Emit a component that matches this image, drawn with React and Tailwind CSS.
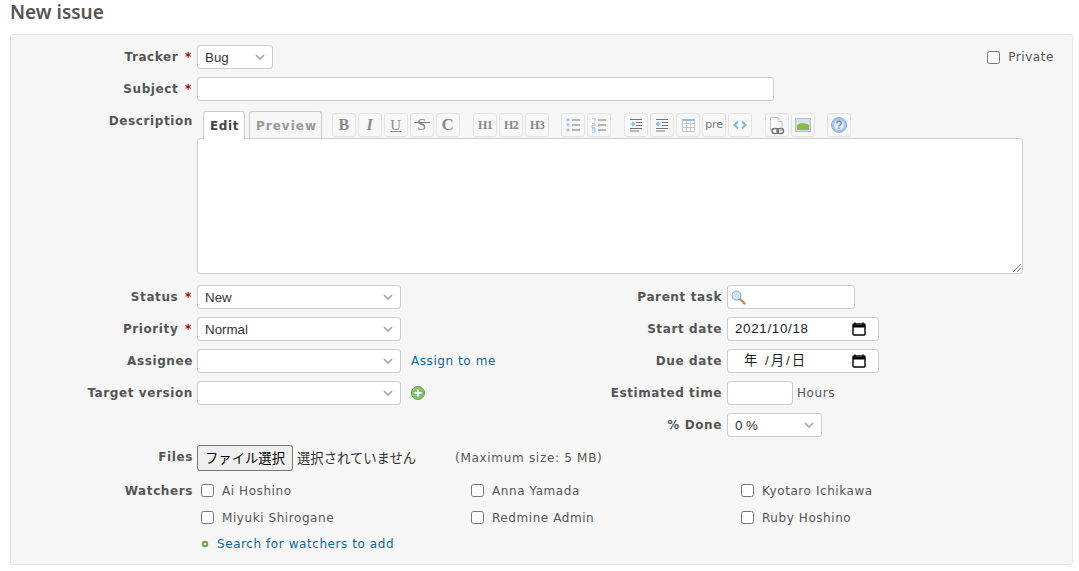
import React from 'react';

const chevron = (
  <svg width="12" height="12" viewBox="0 0 12 12" fill="none" stroke="#a8a8a8" strokeWidth="1.7">
    <path d="M2 4l4 4 4-4" />
  </svg>
);

const calendar = (
  <svg width="14" height="14" viewBox="0 0 14 14" fill="none">
    <path d="M3 0.5v2M11 0.5v2" stroke="#000" strokeWidth="1.5" />
    <rect x="1" y="2" width="12" height="11" rx="1" stroke="#000" strokeWidth="1.4" />
    <path d="M1 3h12v2.5H1z" fill="#000" />
  </svg>
);

function Label({ children, req, className = '' }) {
  return (
    <div className={`w-[182px] shrink-0 text-right font-bold tracking-[0.6px] whitespace-nowrap ${className}`}>
      {children}
      {req && <span className="text-[#bb0000] ml-[2px] mr-[1px]"> *</span>}
    </div>
  );
}

function Select({ value, width = 'w-[204px]' }) {
  return (
    <div className={`${width} h-6 bg-white border border-[#ccc] rounded-[3px] flex items-center justify-between pl-[7px] pr-[6px] font-['Liberation_Sans',sans-serif] text-[13.33px] tracking-normal text-[#333]`}>
      <span className="pt-[1px]">{value}</span>
      {chevron}
    </div>
  );
}

function DateBox({ children }) {
  return (
    <div className="w-[152px] h-6 bg-white border border-[#ccc] rounded-[3px] flex items-center justify-between pl-[7px] pr-[12px] font-['Liberation_Sans','Noto_Sans_CJK_JP',sans-serif] text-[13.33px] tracking-[0.7px] text-[#222]">
      <span className="flex">{children}</span>
      {calendar}
    </div>
  );
}

function Row({ label, req, gap = 'ml-[4px]', children }) {
  return (
    <div className="flex items-center h-6">
      <Label req={req}>{label}</Label>
      <div className={`${gap} flex items-center`}>{children}</div>
    </div>
  );
}

const TextIcon = ({ children, className = '' }) => (
  <span className={`font-['Liberation_Serif',serif] font-bold text-[#8a8a8a] ${className}`}>{children}</span>
);

const indentLines = 'M2 2.5h12M8 5.5h6M8 8.5h6M2 11.5h12M2 14h9';

const toolbar = [
  [
    <TextIcon className="text-[16px]">B</TextIcon>,
    <TextIcon className="text-[16px] italic">I</TextIcon>,
    <TextIcon className="text-[15px] font-normal underline">U</TextIcon>,
    <span className="relative flex">
      <TextIcon className="text-[16px] font-normal">S</TextIcon>
      <span className="absolute left-[-3px] right-[-3px] top-[9px] h-px bg-[#777]" />
    </span>,
    <TextIcon className="text-[17px]">C</TextIcon>,
  ],
  [
    <TextIcon className="text-[12px] tracking-[-0.6px]">H1</TextIcon>,
    <TextIcon className="text-[12px] tracking-[-0.6px]">H2</TextIcon>,
    <TextIcon className="text-[12px] tracking-[-0.6px]">H3</TextIcon>,
  ],
  [
    <svg width="16" height="16" viewBox="0 0 16 16">
      <rect x="1.5" y="1.5" width="3" height="3" rx="1" fill="#a9c4ea" />
      <rect x="1.5" y="6.5" width="3" height="3" rx="1" fill="#a9c4ea" />
      <rect x="1.5" y="11.5" width="3" height="3" rx="1" fill="#a9c4ea" />
      <path d="M7 3h8M7 8h8M7 13h8" stroke="#777" />
    </svg>,
    <svg width="16" height="16" viewBox="0 0 16 16">
      <path d="M1 1.5h3v3M1 6.5h3v2H1v2h3M1 11.5h3v3.5H1M1 13.2h3" stroke="#a9c4ea" fill="none" />
      <path d="M7 3h8M7 8h8M7 13h8" stroke="#777" />
    </svg>,
  ],
  [
    <svg width="16" height="16" viewBox="0 0 16 16">
      <path d={indentLines} stroke="#777" />
      <path d="M2 7h3M4.5 5L7 7 4.5 9z" stroke="#8fbdea" fill="#8fbdea" />
    </svg>,
    <svg width="16" height="16" viewBox="0 0 16 16">
      <path d={indentLines} stroke="#777" />
      <path d="M4 7h3M4.5 5L2 7l2.5 2z" stroke="#8fbdea" fill="#8fbdea" />
    </svg>,
    <svg width="15" height="15" viewBox="0 0 15 15" fill="none">
      <rect x="1.5" y="1.5" width="12" height="12" stroke="#c8c8c8" fill="#fff" />
      <path d="M1 2h13" stroke="#8fbdea" strokeWidth="2" />
      <path d="M1.5 5.5h12M1.5 9.5h12M5.5 3v10M9.5 3v10" stroke="#c8c8c8" />
    </svg>,
    <span className="font-['DejaVu_Sans',sans-serif] text-[11px] tracking-[-0.1px] text-[#777]">pre</span>,
    <svg width="14" height="14" viewBox="0 0 14 14" fill="none" stroke="#7fb4e8" strokeWidth="2">
      <path d="M5 3.5L1.5 7 5 10.5M9 3.5L12.5 7 9 10.5" />
    </svg>,
  ],
  [
    <svg width="18" height="20" viewBox="0 0 18 20" fill="none" className="mt-[1px]">
      <path d="M2.5 1.5h7.5l4 4v9h-11.5z" fill="#fff" stroke="#c4c4c4" />
      <path d="M10 1.5v4h4" stroke="#c4c4c4" />
      <rect x="4" y="12.5" width="6.5" height="5" rx="2.5" fill="#f7f7f7" stroke="#777" strokeWidth="1.4" />
      <rect x="9" y="12.5" width="6.5" height="5" rx="2.5" stroke="#777" strokeWidth="1.4" />
    </svg>,
    <svg width="16" height="14" viewBox="0 0 16 14">
      <rect x="0.5" y="0.5" width="15" height="13" fill="#cfe3f3" stroke="#bbb" />
      <path d="M2 12V7c3-2.5 8-2.5 12 0v5z" fill="#8cb84a" />
    </svg>,
  ],
  [
    <svg width="18" height="18" viewBox="0 0 18 18" fill="none">
      <circle cx="9" cy="9" r="7.5" fill="#a9c4ea" stroke="#8eb2dd" />
      <circle cx="9" cy="9" r="5" fill="#dfeafa" />
      <path d="M6.8 7.3c0-3 4.4-3 4.4 0 0 1.7-2.2 1.7-2.2 3.2" stroke="#6c8ebc" strokeWidth="1.5" />
      <path d="M9 11.5v1.6" stroke="#6c8ebc" strokeWidth="1.5" />
    </svg>,
  ],
];

const groupMargins = ['ml-[10px]', 'ml-[13px]', 'ml-[12px]', 'ml-[13px]', 'ml-[13px]', 'ml-[12px]'];

function Toolbar() {
  return (
    <div className="flex items-center self-start mt-[2px]">
      {toolbar.map((group, i) => (
        <div key={i} className={`flex gap-[2px] ${groupMargins[i]}`}>
          {group.map((icon, j) => (
            <div key={j} className="w-6 h-6 bg-[#f7f7f7] border border-[#e3e3e3] rounded-[3px] flex items-center justify-center">
              {icon}
            </div>
          ))}
        </div>
      ))}
    </div>
  );
}

function Watcher({ name }) {
  return (
    <label className="flex items-center w-[270px] h-[27px]">
      <input type="checkbox" className="w-[13px] h-[13px] ml-[4px] mr-[7px]" />
      <span className="ml-[1px]">{name}</span>
    </label>
  );
}

const watchers = ['Ai Hoshino', 'Anna Yamada', 'Kyotaro Ichikawa', 'Miyuki Shirogane', 'Redmine Admin', 'Ruby Hoshino'];

export default function App() {
  return (
    <div className="font-['DejaVu_Sans',sans-serif] text-[12px] text-[#555] tracking-[0.57px] w-[1079px] h-[571px] overflow-hidden bg-white px-[10px]">
      <h2 className="font-['Noto_Sans',sans-serif] text-[19px] leading-[25px] font-semibold tracking-normal">New issue</h2>
      <div className="mt-[9px] bg-[#f6f6f6] border border-[#e4e4e4] rounded-[3px] h-[531px] w-[1063px] pt-[10px]">
        <div className="flex items-center h-6">
          <Label req>Tracker</Label>
          <div className="ml-[4px] flex-1 flex justify-between items-center pr-[18px]">
            <Select value="Bug" width="w-[76px]" />
            <label className="flex items-center">
              <input type="checkbox" className="w-[13px] h-[13px] mr-[8px]" />
              <span>Private</span>
            </label>
          </div>
        </div>

        <div className="flex items-center h-6 mt-2">
          <Label req>Subject</Label>
          <div className="ml-[4px] w-[577px] h-6 bg-white border border-[#ccc] rounded-[3px]" />
        </div>

        <div className="flex mt-[10px]">
          <Label className="pt-[1px]">Description</Label>
          <div className="ml-[4px] w-[826px]">
            <div className="flex h-[27px] pl-[6px] relative z-10">
              <div className="w-[42px] h-[28px] pl-[1px] bg-white border border-[#ccc] border-b-0 rounded-t-[3px] flex items-center justify-center font-bold text-[#444]">Edit</div>
              <div className="ml-[4px] w-[73px] h-[27px] pt-[1px] pl-[2px] bg-[#f6f6f6] border border-[#ccc] border-b-0 rounded-t-[3px] flex items-center justify-center font-bold tracking-[1px] text-[#999]">Preview</div>
              <Toolbar />
            </div>
            <div className="relative h-[136px] bg-white border border-[#ccc] rounded-[3px]">
              <svg className="absolute right-0 bottom-0" width="11" height="11" viewBox="0 0 11 11" stroke="#777">
                <path d="M10 2L2 10M10 6L6 10" />
              </svg>
            </div>
          </div>
        </div>

        <div className="flex mt-[11px]">
          <div className="w-[529px] flex flex-col gap-2">
            <Row label="Status" req><Select value="New" /></Row>
            <Row label="Priority" req><Select value="Normal" /></Row>
            <Row label="Assignee">
              <Select value="" />
              <a className="ml-[10px] text-[#169]">Assign to me</a>
            </Row>
            <Row label="Target version">
              <Select value="" />
              <svg className="ml-[10px]" width="14" height="14" viewBox="0 0 14 14">
                <circle cx="7" cy="7" r="6.5" fill="#86c46c" stroke="#66a350" />
                <path d="M7 3.5v7M3.5 7h7" stroke="#fff" strokeWidth="1.8" />
              </svg>
            </Row>
          </div>
          <div className="flex flex-col gap-2">
            <Row label="Parent task" gap="ml-[5px]">
              <div className="w-[128px] h-6 bg-white border border-[#ccc] rounded-[3px] flex items-center pl-[3px]">
                <svg width="15" height="15" viewBox="0 0 15 15">
                  <path d="M9 9l4.5 4.5" stroke="#c08a4a" strokeWidth="2.4" strokeLinecap="round" />
                  <circle cx="5.5" cy="5.5" r="4.5" fill="#cfe3f7" stroke="#7fa8d0" />
                </svg>
              </div>
            </Row>
            <Row label="Start date" gap="ml-[5px]"><DateBox>2021/10/18</DateBox></Row>
            <Row label="Due date" gap="ml-[5px]">
              <DateBox>
                <span className="ml-[9px]">年</span>
                <span className="ml-[7px] tracking-[2px]">/月/日</span>
              </DateBox>
            </Row>
            <Row label="Estimated time" gap="ml-[5px]">
              <div className="w-[66px] h-6 bg-white border border-[#ccc] rounded-[3px]" />
              <span className="ml-[4px]">Hours</span>
            </Row>
            <Row label="% Done" gap="ml-[5px]"><Select value="0 %" width="w-[95px]" /></Row>
          </div>
        </div>

        <div className="flex items-center h-[26px] mt-2">
          <Label className="-mt-[2px]">Files</Label>
          <button className="ml-[4px] w-[96px] h-[26px] bg-[#efefef] border border-[#767676] rounded-[3px] font-['Noto_Sans_CJK_JP',sans-serif] text-[13.33px] tracking-normal text-black">ファイル選択</button>
          <span className="ml-[4px] w-[158px] font-['Noto_Sans_CJK_JP',sans-serif] text-[13.33px] tracking-normal text-[#333]">選択されていません</span>
          <span className="tracking-[0.7px]">(Maximum size: 5 MB)</span>
        </div>

        <div className="flex mt-[6px]">
          <Label className="pt-[5px]">Watchers</Label>
          <div className="ml-[4px] w-[810px]">
            <div className="flex flex-wrap">
              {watchers.map(w => <Watcher key={w} name={w} />)}
            </div>
            <div className="flex items-center h-[25px] pl-[4px]">
              <svg width="8" height="8" viewBox="0 0 8 8">
                <circle cx="4" cy="4" r="3.2" fill="#6a9f4f" />
                <circle cx="4" cy="4" r="1.3" fill="#dcebcf" />
              </svg>
              <a className="ml-[8px] text-[#169]">Search for watchers to add</a>
            </div>
          </div>
        </div>
      </div>
    </div>
  );
}
